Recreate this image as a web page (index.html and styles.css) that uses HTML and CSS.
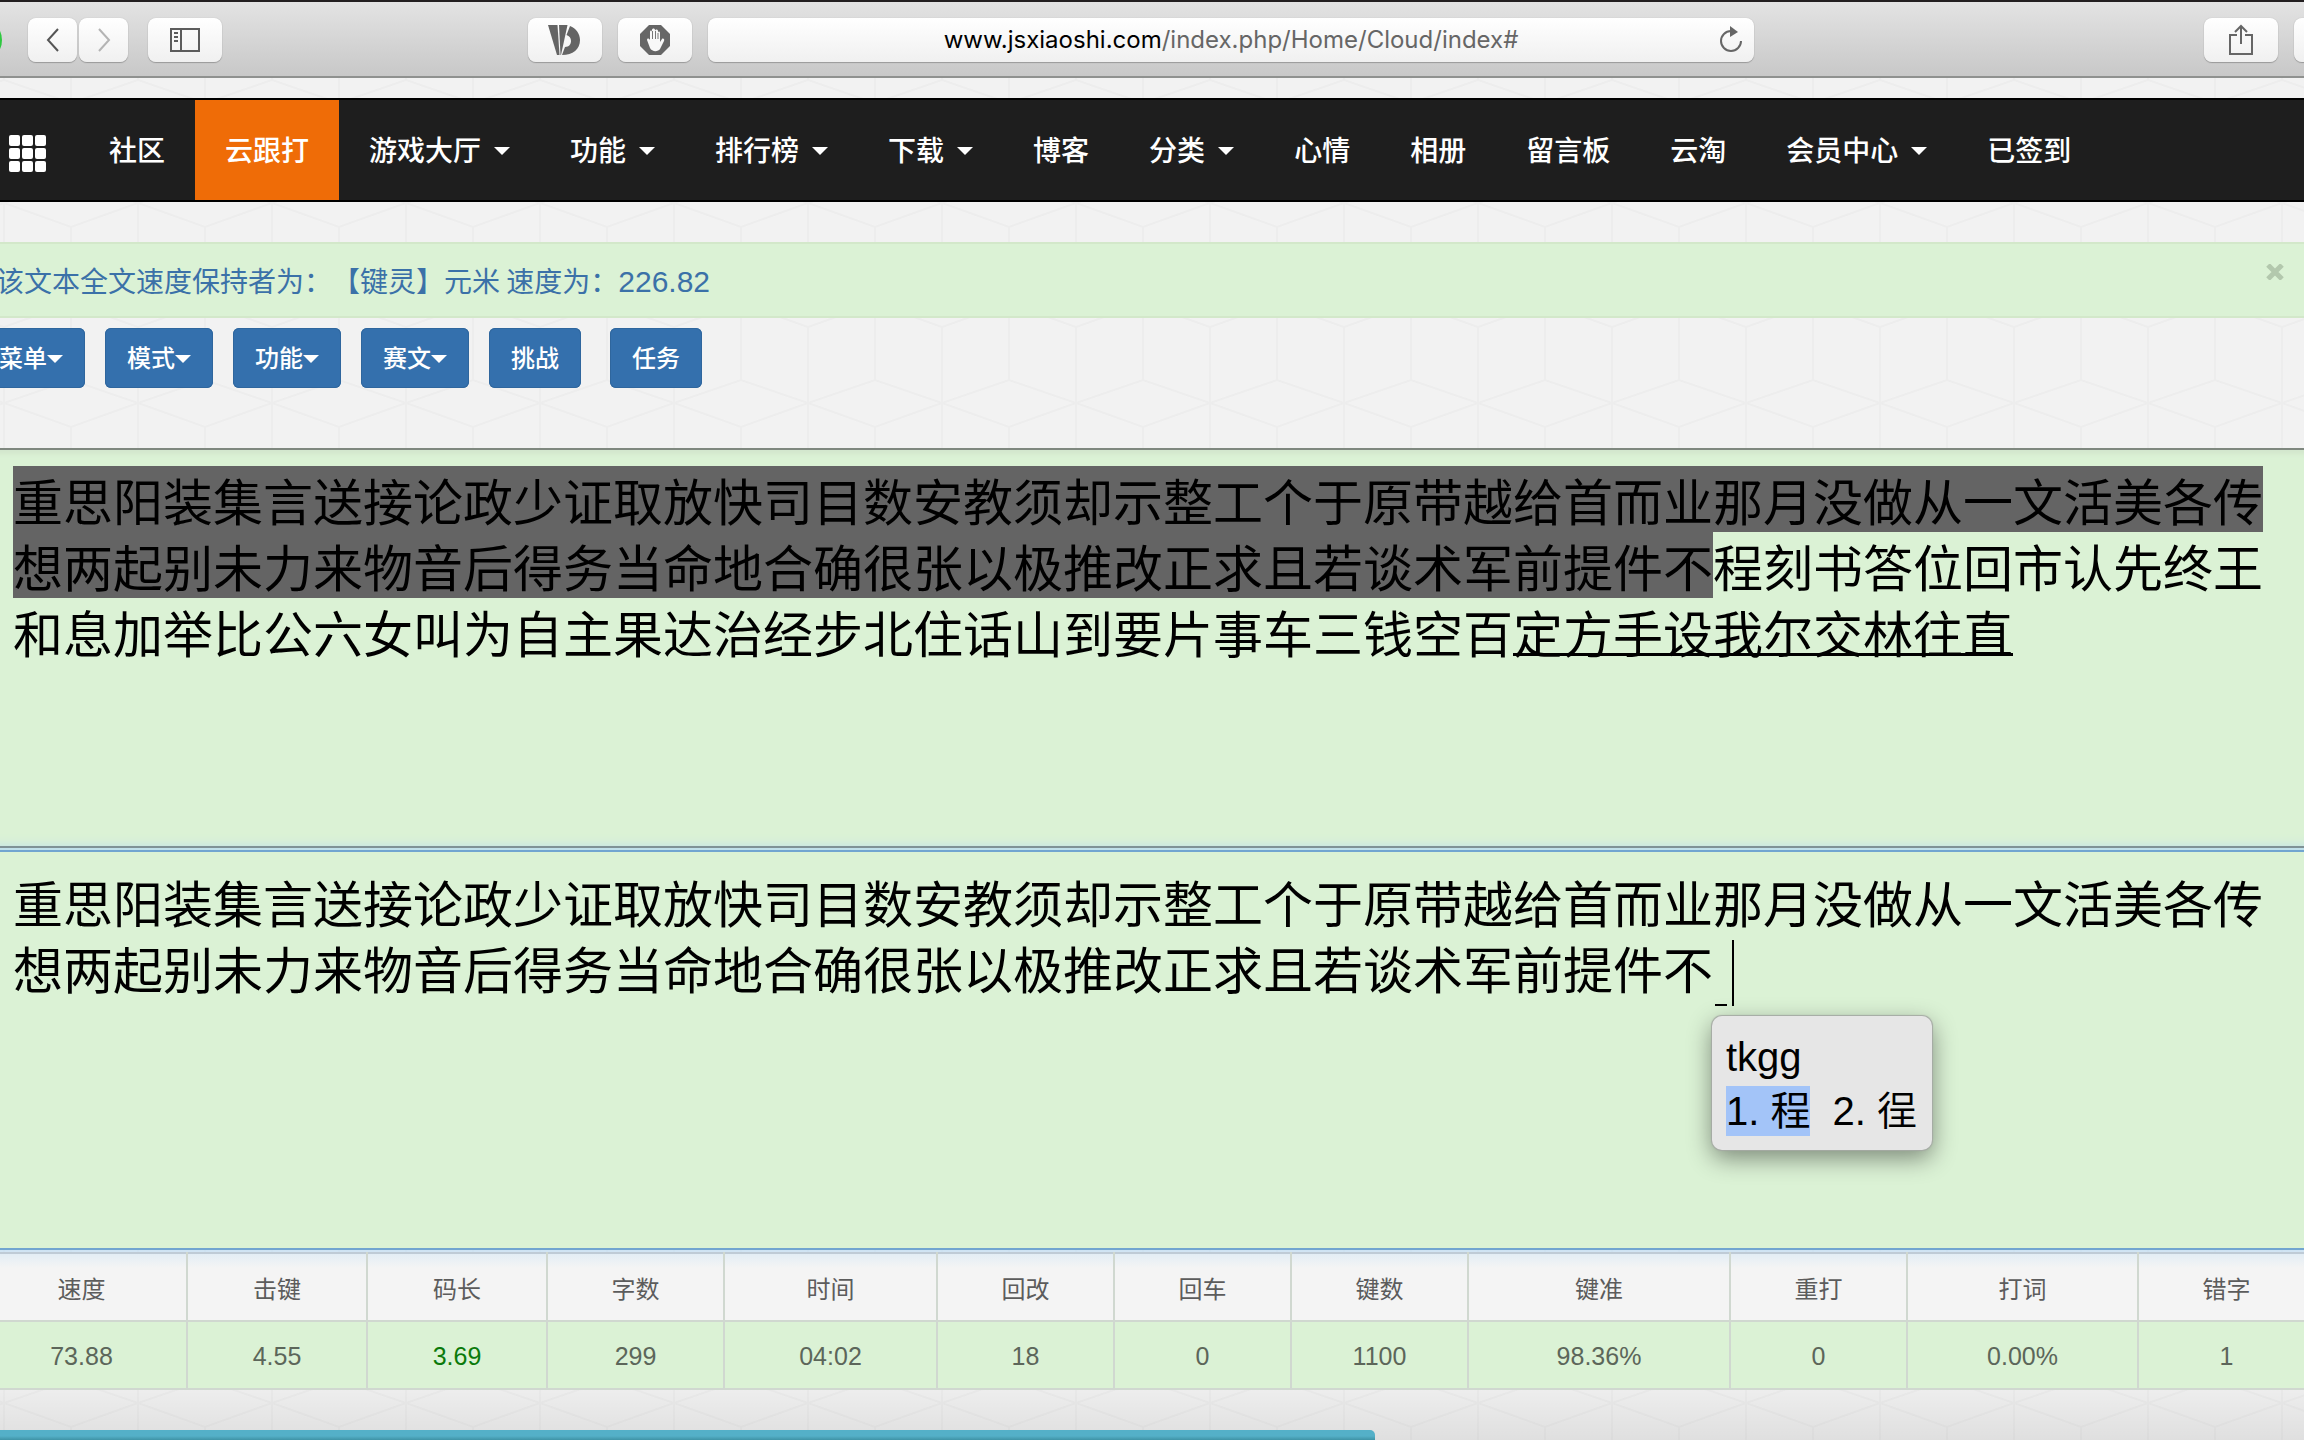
FILE: index.html
```html
<!DOCTYPE html>
<html lang="zh-CN">
<head>
<meta charset="utf-8">
<meta name="viewport" content="width=device-width, initial-scale=1">
<title>云跟打</title>
<link rel="stylesheet" href="styles.css">
</head>
<body>
<header class="toolbar">
  <div class="toolbar-left">
    <span class="window-dot"></span>
    <div class="history">
      <button class="tool tool-half" type="button" aria-label="后退"><svg width="14" height="26" viewBox="0 0 14 26"><path d="M12 2L2 13L12 24" fill="none" stroke="#555" stroke-width="2"/></svg></button>
      <button class="tool tool-half" type="button" aria-label="前进"><svg width="14" height="26" viewBox="0 0 14 26"><path d="M2 2L12 13L2 24" fill="none" stroke="#b4b4b4" stroke-width="2"/></svg></button>
    </div>
    <button class="tool" type="button" aria-label="边栏"><svg width="30" height="24" viewBox="0 0 30 24"><path d="M1 1H29V23H1ZM11 1V23M4 5H8M4 9H8M4 13H8" fill="none" stroke="#5c5c5c" stroke-width="2"/></svg></button>
  </div>
  <div class="toolbar-center">
    <button class="tool" type="button" aria-label="VD"><svg width="34" height="30" viewBox="0 0 34 30"><path d="M0 0H9.500L11.500 30H9Z" fill="#646464"/><path d="M11 0H19.500L13 30H12.500Z" fill="#646464"/><path d="M22 1C28 3 32 9 32 15C32 24 25 30 14 30L17 22C21 22 23 19 23 16C23 13 21.500 11 18.500 10Z" fill="#646464"/></svg></button>
    <button class="tool" type="button" aria-label="拦截"><svg width="30" height="30" viewBox="0 0 30 30"><path d="M9 0H21L30 9V21L21 30H9L0 21V9Z" fill="#666"/><path d="M10 23L7 15C7 13 9 13 10 15V7C10 5 12 5 12 7V13V5C12 3 15 3 15 5V13V6C15 4 18 4 18 6V14V8C18 6 20 6 20 8V17L22 14C23 13 25 14 24 16L20 24C18 27 12 27 10 23Z" fill="#f8f8f8"/><path d="M12.500 6V14M15.500 6V14M18 8V14" stroke="#777" stroke-width="1" fill="none"/></svg></button>
    <div class="address">
      <a class="url" href="#"><span class="host">www.jsxiaoshi.com</span>/index.php/Home/Cloud/index#</a>
      <button class="reload" type="button" aria-label="刷新"><svg width="26" height="28" viewBox="0 0 26 28"><path d="M13 5A10 10 0 1 0 23 15" fill="none" stroke="#666" stroke-width="2"/><path d="M12 0L20 6L12 11Z" fill="#666"/></svg></button>
    </div>
  </div>
  <div class="toolbar-right">
    <button class="tool" type="button" aria-label="共享"><svg width="26" height="32" viewBox="0 0 26 32"><path d="M9 11H2V30H24V11H17M13 20V2M7 8L13 2L19 8" fill="none" stroke="#666" stroke-width="2"/></svg></button>
    <button class="tool" type="button" aria-label="标签页"></button>
  </div>
</header>

<nav class="site-nav">
  <a class="apps" href="#" aria-label="全部应用"><i></i><i></i><i></i><i></i><i></i><i></i><i></i><i></i><i></i></a>
  <a class="nav-item" href="#">社区</a>
  <a class="nav-item active" href="#">云跟打</a>
  <a class="nav-item" href="#">游戏大厅<span class="caret"></span></a>
  <a class="nav-item" href="#">功能<span class="caret"></span></a>
  <a class="nav-item" href="#">排行榜<span class="caret"></span></a>
  <a class="nav-item" href="#">下载<span class="caret"></span></a>
  <a class="nav-item" href="#">博客</a>
  <a class="nav-item" href="#">分类<span class="caret"></span></a>
  <a class="nav-item" href="#">心情</a>
  <a class="nav-item" href="#">相册</a>
  <a class="nav-item" href="#">留言板</a>
  <a class="nav-item" href="#">云淘</a>
  <a class="nav-item" href="#">会员中心<span class="caret"></span></a>
  <a class="nav-item" href="#">已签到</a>
</nav>

<main class="page">
  <div class="notice" role="status">
    <span>该文本全文速度保持者为：【键灵】元米 速度为：<span class="num">226.82</span></span>
    <button class="close" type="button" aria-label="关闭"><svg width="20" height="16" viewBox="0 0 20 16"><path d="M3 1L17 15M17 1L3 15" stroke="#b3c8ad" stroke-width="5"/></svg></button>
  </div>

  <div class="actions">
    <button class="btn" type="button">菜单<span class="caret"></span></button>
    <button class="btn" type="button">模式<span class="caret"></span></button>
    <button class="btn" type="button">功能<span class="caret"></span></button>
    <button class="btn" type="button">赛文<span class="caret"></span></button>
    <button class="btn" type="button">挑战</button>
    <button class="btn btn-apart" type="button">任务</button>
  </div>

  <div class="source"><span class="typed">重思阳装集言送接论政少证取放快司目数安教须却示整工个于原带越给首而业那月没做从一文活美各传想两起别未力来物音后得务当命地合确很张以极推改正求且若谈术军前提件不</span>程刻书答位回市认先终王和息加举比公六女叫为自主果达治经步北住话山到要片事车三钱空百<span class="phrase">定方手设我尔交林往直</span></div>

  <div class="typing">
    <textarea class="entry" aria-label="跟打输入" spellcheck="false">重思阳装集言送接论政少证取放快司目数安教须却示整工个于原带越给首而业那月没做从一文活美各传想两起别未力来物音后得务当命地合确很张以极推改正求且若谈术军前提件不</textarea>
    <span class="composing"></span>
    <div class="ime">
      <div class="ime-code">tkgg</div>
      <div class="ime-list"><span class="picked">1. 程</span><span>2. 徎</span></div>
    </div>
  </div>

  <table class="stats">
    <colgroup><col class="w-speed"><col class="w-wide"><col class="w-wide"><col class="w-std"><col class="w-time"><col class="w-std"><col class="w-std"><col class="w-std"><col class="w-accuracy"><col class="w-std"><col class="w-words"><col class="w-std"></colgroup>
    <thead>
      <tr><th>速度</th><th>击键</th><th>码长</th><th>字数</th><th>时间</th><th>回改</th><th>回车</th><th>键数</th><th>键准</th><th>重打</th><th>打词</th><th>错字</th></tr>
    </thead>
    <tbody>
      <tr><td>73.88</td><td>4.55</td><td class="good">3.69</td><td>299</td><td>04:02</td><td>18</td><td>0</td><td>1100</td><td>98.36%</td><td>0</td><td>0.00%</td><td>1</td></tr>
    </tbody>
  </table>
</main>

<footer class="bottom">
  <div class="progress"><div class="progress-bar" style="width:59.7%"></div></div>
</footer>
</body>
</html>
```
FILE: styles.css
```css
* { box-sizing: border-box; }

body {
  margin: 0;
  overflow-x: hidden;
  font-family: "Noto Sans CJK SC", sans-serif;
  font-size: 28px;
  line-height: 40px;
  text-spacing-trim: space-all;
  color: #000;
  background: #f2f2f2 url("data:image/svg+xml,%3Csvg xmlns='http://www.w3.org/2000/svg' width='134' height='200'%3E%3Cpath d='M67 27V180M0 0V80M0 127V200M134 0V80M134 127V200M0 3L67 27L134 3L67 -20ZM0 203L67 180L134 203M67 103L0 80M67 103L134 80M67 103L0 127M67 103L134 127' fill='none' stroke='%23ededed' stroke-width='2'/%3E%3C/svg%3E") 4px 0;
}

button {
  margin: 0;
  padding: 0;
  border: 0;
  background: none;
  font: inherit;
  color: inherit;
}

svg { display: block; }
a { color: inherit; text-decoration: none; }

/* Browser toolbar */
.toolbar {
  display: grid;
  grid-template-columns: 528px minmax(0, 1fr) 550px;
  align-items: center;
  height: 78px;
  padding-top: 2px;
  border-top: 2px solid #231f20;
  border-bottom: 2px solid #8f918f;
  background: linear-gradient(#e3e3e3, #c8c8c8);
  overflow: hidden;
}
.toolbar-left, .toolbar-center, .toolbar-right, .history { display: flex; align-items: center; }
.toolbar-left { gap: 20px; }
.window-dot {
  width: 12px;
  height: 24px;
  margin: 0 -14px 0 -10px;
  border-radius: 50%;
  background: #2fc840;
}
.history { gap: 2px; margin-left: 20px; }
.toolbar-center { gap: 16px; }
.toolbar-right { gap: 16px; padding-left: 450px; }
.tool, .address {
  flex: none;
  display: flex;
  align-items: center;
  justify-content: center;
  width: 74px;
  height: 44px;
  border-radius: 8px;
  background: linear-gradient(#fff, #f0f0f0);
  box-shadow: 0 1px 1px #999, 0 0 1px #aaa;
}
.tool-half { width: 49px; }
.address {
  flex: 1;
  display: grid;
  grid-template-columns: 1fr auto 1fr;
  padding: 0 10px;
}
.url {
  grid-column: 2;
  font-family: Inter, sans-serif;
  font-size: 24px;
  color: #666;
}
.host { color: #000; }
.reload { justify-self: end; }

/* Site navigation */
.site-nav {
  display: flex;
  margin-top: 20px;
  padding-left: 9px;
  border: solid #000;
  border-width: 2px 0;
  background: #1e1e1e;
  font-weight: 500;
  color: #fff;
}
.apps {
  display: grid;
  grid-template-columns: repeat(3, 11px);
  grid-auto-rows: 11px;
  gap: 2px;
  align-content: center;
  width: 70px;
  padding-top: 6px;
}
.apps i { border-radius: 2px; background: #fff; }
.nav-item { display: flex; align-items: center; padding: 29px 30px 31px; white-space: nowrap; }
.active { background: #ef6c07; }
.caret {
  border: 8px solid transparent;
  border-top-color: currentColor;
  border-bottom: 0;
}
.nav-item .caret { margin: 4px 0 0 13px; }

/* The page is a little wider than the window and is cut at both sides */
.page { margin: 40px -11px 0 -23px; }

.notice {
  display: flex;
  justify-content: space-between;
  padding: 16px 30px 16px 19px;
  border: solid #d3e8ca;
  border-width: 2px 0;
  background: #dbf2d5;
  color: #3b71a8;
}
.num { font-family: "Liberation Sans", sans-serif; font-size: 30px; line-height: 1; }
.close { align-self: flex-start; padding-top: 4px; line-height: 1; }

.actions { display: flex; gap: 20px; margin: 10px 0 60px; }
.btn {
  display: flex;
  align-items: center;
  padding: 9px 22px 11px;
  border-radius: 6px;
  background: #3470ad;
  box-shadow: inset 0 0 0 1px #2f669d;
  font-size: 24px;
  font-weight: 500;
  color: #fff;
}
.btn .caret { margin-top: 4px; }
.btn-apart { margin-left: 9px; }

/* Source text and typing area */
.source, .entry {
  display: block;
  width: 100%;
  height: 398px;
  padding: 16px 40px 16px 36px;
  background: #dbf2d5;
  font: 50px/66px "Noto Sans CJK SC", sans-serif;
  word-break: break-all;
}
.source { border-top: 2px solid #7f887f; box-shadow: inset 0 4px 4px #d3e6cd; }
.typed {
  background: linear-gradient(#646464, #646464) center / 100% 66px no-repeat;
  -webkit-box-decoration-break: clone;
  box-decoration-break: clone;
}
.phrase {
  text-decoration: underline;
  text-decoration-thickness: 3px;
  text-decoration-skip-ink: none;
  text-underline-offset: 0;
}
.typing {
  position: relative;
  padding-top: 2px;
  border-top: 2px solid #7f9296;
  background: #c0e0ea;
  box-shadow: 0 2px 12px #b5d8f3;
}
.entry {
  height: 400px;
  margin: 0;
  border: solid #71a5d0;
  border-width: 2px 0;
  border-radius: 0;
  outline: 0;
  resize: none;
  overflow: hidden;
  color: #000;
}

.composing {
  position: absolute;
  left: 1738px;
  top: 92px;
  width: 19px;
  height: 66px;
  border-right: 2px solid #000;
  background: linear-gradient(#000, #000) 0 100% / 12px 2px no-repeat;
}
.ime {
  position: absolute;
  left: 1735px;
  top: 168px;
  padding: 16px 15px 14px 14px;
  border-radius: 10px;
  background: #e6e6e6;
  box-shadow: 0 0 1px 1px #a5aaa4, 0 8px 24px #00000070;
  font: 40px/50px "Liberation Sans", "Noto Sans CJK SC", sans-serif;
  white-space: nowrap;
}
.ime-code { margin-bottom: 4px; }
.ime-list { display: flex; gap: 22px; }
.picked { background: #a3c4f8; }

/* Statistics */
.stats {
  position: relative;
  width: 100%;
  margin-top: 2px;
  table-layout: fixed;
  border-collapse: collapse;
  border-top: 2px solid #bfcbd6;
  font-size: 24px;
  color: #5c665a;
}
.stats th, .stats td {
  height: 68px;
  padding: 2px 0 0;
  border: 2px solid #d0d8d0;
  border-width: 0 2px 2px 0;
  font-weight: 400;
  text-align: center;
}
.stats th { background: linear-gradient(#e3edf5, #f4f4f4 14px); color: #5c5c5c; }
.stats td { background: #dbf2d5; font-family: "Liberation Sans", sans-serif; font-size: 25px; }
.stats .good { color: #0b7a0b; }
.w-speed { width: 210px; }
.w-wide { width: 180px; }
.w-std { width: 177px; }
.w-time { width: 213px; }
.w-accuracy { width: 262px; }
.w-words { width: 231px; }

.bottom {
  display: flex;
  flex-direction: column;
  justify-content: flex-end;
  height: 50px;
  background: linear-gradient(#00000005, #00000014);
}
.progress-bar {
  height: 10px;
  border-radius: 0 5px 0 0;
  background: linear-gradient(#54b0c8 60%, #3f93a6);
}
```
